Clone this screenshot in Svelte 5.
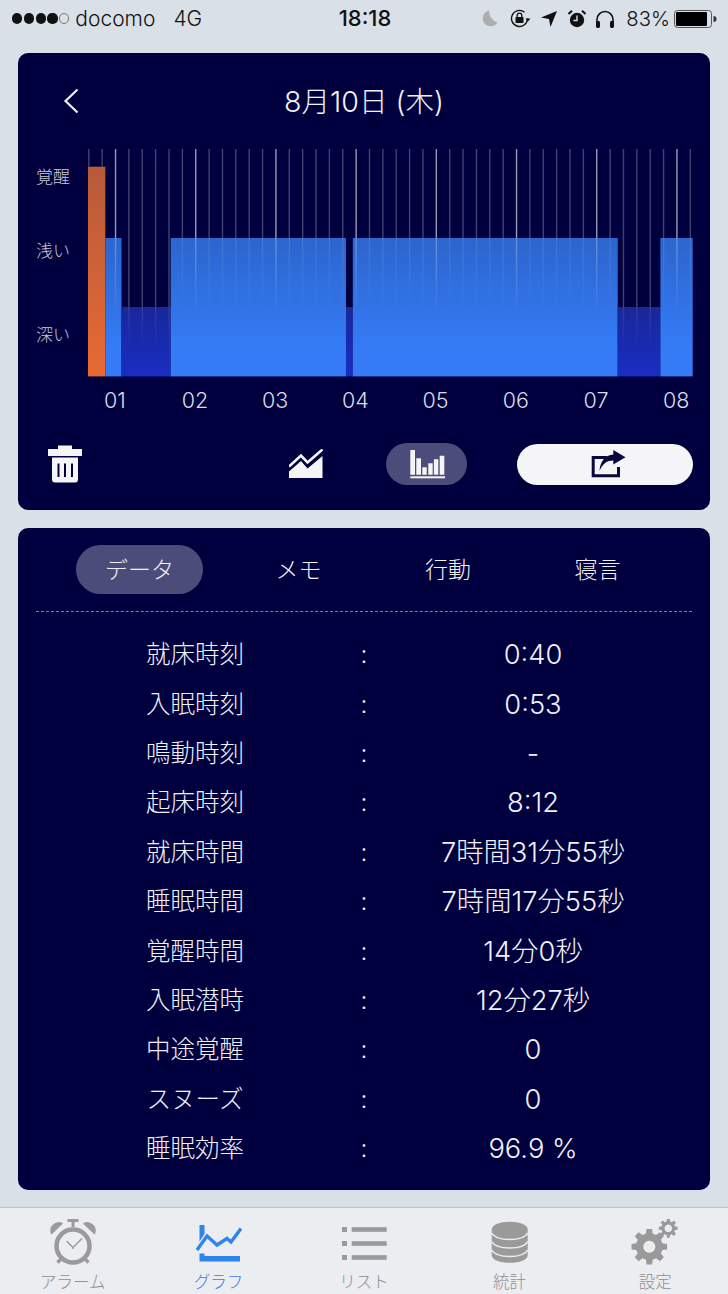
<script lang="ts">
	const rows = [
		['就床時刻', '0:40'],
		['入眠時刻', '0:53'],
		['鳴動時刻', '-'],
		['起床時刻', '8:12'],
		['就床時間', '7時間31分55秒'],
		['睡眠時間', '7時間17分55秒'],
		['覚醒時間', '14分0秒'],
		['入眠潜時', '12分27秒'],
		['中途覚醒', '0'],
		['スヌーズ', '0'],
		['睡眠効率', '96.9 %']
	];

	const tabs = ['データ', 'メモ', '行動', '寝言'];

	// chart stages, in page coordinates
	const bars = [
		{ x: 88, to: 105.3, top: 166.7, fill: 'url(#awake)' },
		{ x: 105.3, to: 121.5, top: 238, fill: 'url(#light)' },
		{ x: 121.5, to: 170.7, top: 307, fill: 'url(#deep)' },
		{ x: 170.7, to: 346, top: 238, fill: 'url(#light)' },
		{ x: 346, to: 352.8, top: 307, fill: 'url(#deep)' },
		{ x: 352.8, to: 617.7, top: 238, fill: 'url(#light)' },
		{ x: 617.7, to: 660.4, top: 307, fill: 'url(#deep)' },
		{ x: 660.4, to: 692.7, top: 238, fill: 'url(#light)' }
	];

	const step = 80.2 / 6;
	// 46 ticks, every sixth one is an hour mark
	const ticks = Array.from({ length: 46 }, (_, i) => {
		const x = 88.8 + i * step;
		const bar = bars.find((b) => x >= b.x && x < b.to);
		return { x, hour: i % 6 === 2, top: bar ? bar.top : 307 };
	});
	const hours = ['01', '02', '03', '04', '05', '06', '07', '08'];

	function gear(cx: number, cy: number, outer: number, inner: number, teeth: number) {
		const pts: string[] = [];
		const seg = (Math.PI * 2) / teeth;
		for (let i = 0; i < teeth; i++) {
			const a = i * seg;
			const at = (r: number, o: number) =>
				`${(cx + r * Math.cos(a + o * seg)).toFixed(2)} ${(cy + r * Math.sin(a + o * seg)).toFixed(2)}`;
			pts.push(at(inner, -0.32), at(outer, -0.2), at(outer, 0.2), at(inner, 0.32));
		}
		return 'M' + pts.join('L') + 'Z';
	}
</script>

<div class="page">
	<header class="status">
		<div class="status-left">
			<span class="dots">
				<i></i><i></i><i></i><i></i><i class="off"></i>
			</span>
			<span class="carrier">docomo</span>
			<span class="net">4G</span>
		</div>
		<div class="clock">18:18</div>
		<div class="status-right">
			<svg class="moon" width="16" height="17" viewBox="0 0 16 17">
				<path d="M7 0.5A8 8 0 1 0 15.5 12.5A12 12 0 0 1 7 0.5Z" fill="#adadb0" />
			</svg>
			<svg class="rot" width="21" height="19" viewBox="0 0 21 19">
				<path d="M17.5 9.5A8 8 0 1 1 14.5 3.2" fill="none" stroke="#111" stroke-width="1.4" />
				<path d="M15.5 9.5h5l-2.5 3z" fill="#111" />
				<rect x="5.5" y="8" width="8" height="6" rx="0.8" fill="#111" />
				<path d="M7.2 8V6.4a2.3 2.3 0 0 1 4.6 0V8" fill="none" stroke="#111" stroke-width="1.3" />
			</svg>
			<svg class="arrow" width="16" height="16" viewBox="0 0 16 16">
				<path d="M16 0L9.5 16L8 8L0 6.5Z" fill="#111" />
			</svg>
			<svg class="alarm" width="18" height="18" viewBox="0 0 18 18">
				<circle cx="9" cy="10" r="7.2" fill="#111" />
				<path d="M9 5.5V10.5H5.5" fill="none" stroke="#dae0e8" stroke-width="1.4" />
				<path d="M0.5 4L4 0.8M17.5 4L14 0.8" stroke="#111" stroke-width="2" />
			</svg>
			<svg class="phones" width="20" height="18" viewBox="0 0 20 18">
				<path d="M2 13V9.5a8 8 0 0 1 16 0V13" fill="none" stroke="#111" stroke-width="1.6" />
				<rect x="1" y="11" width="4" height="7" rx="1.4" fill="#111" />
				<rect x="15" y="11" width="4" height="7" rx="1.4" fill="#111" />
			</svg>
			<span class="pct">83%</span>
			<svg class="battery" width="44" height="18" viewBox="0 0 44 18">
				<rect x="0.5" y="0.5" width="37" height="17" rx="3" fill="none" stroke="#555" />
				<rect x="2" y="2" width="31" height="14" rx="1" fill="#000" />
				<path d="M39.5 6a3 3 0 0 1 0 6z" fill="#333" />
			</svg>
		</div>
	</header>

	<section class="card chart-card">
		<div class="title-row">
			<svg class="back" width="16" height="26" viewBox="0 0 16 26">
				<path d="M14.5 1.5L2.5 13L14.5 24.5" fill="none" stroke="#f1f1f5" stroke-width="2.2" />
			</svg>
			<h1>8月10日 (木)</h1>
		</div>

		<svg class="chart" width="692" height="270" viewBox="18 149 692 270">
			<defs>
				<linearGradient id="light" gradientUnits="userSpaceOnUse" x1="0" y1="238" x2="0" y2="345">
					<stop offset="0" stop-color="#2c65cd" />
					<stop offset="1" stop-color="#347bf5" />
				</linearGradient>
				<linearGradient id="deep" gradientUnits="userSpaceOnUse" x1="0" y1="307" x2="0" y2="376">
					<stop offset="0" stop-color="#19279a" />
					<stop offset="1" stop-color="#1a2dc3" />
				</linearGradient>
				<linearGradient id="awake" gradientUnits="userSpaceOnUse" x1="0" y1="167" x2="0" y2="376">
					<stop offset="0" stop-color="#b75a3a" />
					<stop offset="1" stop-color="#e76a33" />
				</linearGradient>
				<linearGradient id="tick" x1="0" y1="0" x2="0" y2="1">
					<stop offset="0" stop-color="#fff" stop-opacity="1" />
					<stop offset="1" stop-color="#fff" stop-opacity="0" />
				</linearGradient>
			</defs>

			<!-- ticks run behind the bars and only bleed faintly through their top -->
			{#each ticks as t}
				<rect x={t.x - 0.7} y="149" width="1.4" height={t.top - 149} fill="#fff" opacity={t.hour ? 0.6 : 0.26} />
			{/each}

			{#each bars as b}
				<rect x={b.x} y={b.top} width={b.to - b.x} height={376.4 - b.top} fill={b.fill} />
			{/each}

			{#each ticks as t}
				{#if t.x > 105.3}
					<rect
						x={t.x - 0.7}
						y={t.top}
						width="1.4"
						height={t.top < 300 ? 76 : 40}
						fill="url(#tick)"
						opacity={t.hour ? 0.28 : 0.1}
					/>
				{/if}
			{/each}

			<text class="stage" x="53" y="183">覚醒</text>
			<text class="stage" x="53" y="257">浅い</text>
			<text class="stage" x="53" y="341">深い</text>

			{#each hours as h, i}
				<text class="hour" x={114.8 + i * 80.2} y="408">{h}</text>
			{/each}
		</svg>

		<div class="tools">
			<svg class="trash" width="34" height="38" viewBox="0 0 34 38">
				<path d="M10 0.5H24V4H34V11H0V4H10Z" fill="#f5f5f7" />
				<path
					fill-rule="evenodd"
					d="M4 12.5H30V34.5a3 3 0 0 1-3 3H7a3 3 0 0 1-3-3ZM9.5 18.5V32H11.5V18.5ZM16 18.5V32H18V18.5ZM23 18.5V32H25V18.5Z"
					fill="#f5f5f7"
				/>
			</svg>
			<svg class="line-btn" width="34" height="30" viewBox="289 449 34 30">
				<path d="M289 466.5L301 455.5L307.5 462.5L322.5 449.5" fill="none" stroke="#f5f5f7" stroke-width="2.6" />
				<path d="M289 471.5L301 461L307.5 468.5L322.5 456V478H289Z" fill="#f5f5f7" />
			</svg>
			<div class="bars-btn">
				<svg width="36" height="30" viewBox="408 450 36 30">
					<path
						d="M409.3 451H414V475.7H409.3ZM415.3 459.3H420V475.7H415.3ZM421.3 468.3H425.7V475.7H421.3ZM427.3 464.3H431.7V475.7H427.3ZM432.9 460.3H437.3V475.7H432.9ZM438.7 456.7H443.3V475.7H438.7Z"
						fill="#f5f5f7"
					/>
					<rect x="409.3" y="477.3" width="34.7" height="2" fill="#f5f5f7" />
				</svg>
			</div>
			<div class="share-btn">
				<svg width="36" height="30" viewBox="590 449 36 30">
					<path d="M607 457.5H593.2V475.8H618.5V467" fill="none" stroke="#08083f" stroke-width="3" />
					<path d="M613.3 450L625.5 457.3L613.3 464.5V460.5C607 460.5 602.5 463.5 599.5 471C600 462 605 455 613.3 454.5Z" fill="#08083f" />
				</svg>
			</div>
		</div>
	</section>

	<section class="card data-card">
		<nav class="tabs">
			{#each tabs as tab, i}
				<div class="tab" class:active={i === 0}>{tab}</div>
			{/each}
		</nav>
		<div class="divider"></div>
		<div class="rows">
			{#each rows as [label, value]}
				<div class="row">
					<span class="label">{label}</span>
					<span>:</span>
					<span class="value">{value}</span>
				</div>
			{/each}
		</div>
	</section>

	<footer class="tabbar">
		<div class="item">
			<svg width="48" height="48" viewBox="49 1218 48 48">
				<circle cx="73" cy="1246" r="16.5" fill="none" stroke="#9a9a9a" stroke-width="4.5" />
				<path d="M73 1247.5L66.5 1241M73 1247.5L82 1238.5M73 1247.5V1249" fill="none" stroke="#9a9a9a" stroke-width="1.4" />
				<path d="M51.5 1233.5A8 8 0 0 1 62 1223.5ZM94.5 1233.5A8 8 0 0 0 84 1223.5Z" fill="#9a9a9a" stroke="#9a9a9a" stroke-width="1.5" stroke-linejoin="round" />
				<path d="M73 1222V1227" stroke="#9a9a9a" stroke-width="3" />
				<path d="M67.5 1220.5H78.5" stroke="#9a9a9a" stroke-width="3" />
				<path d="M62 1258L57.5 1262.5M84 1258L88.5 1262.5" stroke="#9a9a9a" stroke-width="3.5" />
			</svg>
			<span>アラーム</span>
		</div>
		<div class="item on">
			<svg width="48" height="48" viewBox="194 1218 48 48">
				<path d="M199.5 1225H204.5V1234L199.5 1241.5ZM199.5 1253.5H204.5V1256H240V1261.5H199.5Z" fill="#2f84ee" />
				<path d="M197 1250L207 1236L217 1245L227 1238.5L231 1242L241 1228.5" fill="none" stroke="#2f84ee" stroke-width="3.4" />
			</svg>
			<span>グラフ</span>
		</div>
		<div class="item">
			<svg width="48" height="48" viewBox="339 1218 48 48">
				<g fill="#9a9a9a">
					<rect x="341" y="1227" width="5" height="5" />
					<rect x="350.7" y="1227.2" width="35" height="4.6" />
					<rect x="341" y="1241" width="5" height="5" />
					<rect x="350.7" y="1241.2" width="35" height="4.6" />
					<rect x="341" y="1255" width="5" height="5" />
					<rect x="350.7" y="1255.2" width="35" height="4.6" />
				</g>
			</svg>
			<span>リスト</span>
		</div>
		<div class="item">
			<svg width="48" height="48" viewBox="485 1218 48 48">
				<path d="M490.7 1229.5C490.7 1224.5 499 1221.7 508.7 1221.7S526.7 1224.5 526.7 1229.5V1255C526.7 1260 518.5 1262.8 508.7 1262.8S490.7 1260 490.7 1255Z" fill="#9a9a9a" />
				<path d="M490.7 1233C493 1237.5 500 1239.5 508.7 1239.5S524.5 1237.5 526.7 1233M490.7 1241.5C493 1246 500 1248 508.7 1248S524.5 1246 526.7 1241.5M490.7 1250C493 1254.5 500 1256.5 508.7 1256.5S524.5 1254.5 526.7 1250" fill="none" stroke="#ebedf0" stroke-width="1.6" />
			</svg>
			<span>統計</span>
		</div>
		<div class="item">
			<svg width="48" height="48" viewBox="631 1218 48 48">
				<path fill-rule="evenodd" d={gear(649.3, 1246.7, 18, 13.5, 8) + 'M649.3 1240.7a6 6 0 1 0 .01 0Z'} fill="#9a9a9a" />
				<path fill-rule="evenodd" d={gear(668.3, 1228.3, 9.5, 7, 8) + 'M668.3 1224.5a3.8 3.8 0 1 0 .01 0Z'} fill="#9a9a9a" />
			</svg>
			<span>設定</span>
		</div>
	</footer>
</div>

<style>
	:global(body) {
		background: #dae0e8;
	}

	.page {
		height: 1294px;
		overflow: hidden;
		display: flex;
		flex-direction: column;
		font-family: Inter, 'Noto Sans CJK JP', sans-serif;
		font-weight: 300;
	}

	.status {
		height: 37px;
		flex-shrink: 0;
		padding: 0 10px 0 12px;
		display: grid;
		grid-template-columns: 1fr auto 1fr;
		align-items: center;
		font-size: 21px;
		color: #111;
	}

	.status-left,
	.status-right {
		display: flex;
		align-items: center;
	}

	.status-right {
		justify-content: flex-end;
	}

	.dots {
		display: flex;
		gap: 1.6px;
		margin-right: 6px;
	}

	.dots i {
		width: 10.2px;
		height: 10.2px;
		border-radius: 50%;
		background: #111;
		box-sizing: border-box;
	}

	.dots i.off {
		background: none;
		border: 1px solid #777;
	}

	.net {
		margin-left: 18px;
	}

	.clock {
		font-weight: 500;
		font-size: 22px;
		padding-bottom: 2px;
	}

	.moon {
		margin-right: 12px;
	}

	.rot {
		margin-right: 10px;
	}

	.arrow {
		margin-right: 11px;
	}

	.alarm {
		margin-right: 9px;
	}

	.phones {
		margin-right: 11px;
	}

	.pct {
		font-size: 20.3px;
		margin-right: 4px;
	}

	.card {
		margin: 0 18px;
		background: #00003f;
		border-radius: 10px;
		color: #f1f1f5;
		flex-shrink: 0;
	}

	.chart-card {
		margin-top: 16px;
		height: 457px;
	}

	.title-row {
		height: 96px;
		box-sizing: border-box;
		padding-bottom: 4px;
		display: flex;
		align-items: center;
		justify-content: center;
		position: relative;
	}

	.back {
		position: absolute;
		left: 45px;
		top: 35px;
	}

	h1 {
		margin: 0;
		font-size: 28.6px;
		font-weight: 300;
	}

	.chart {
		display: block;
	}

	.stage {
		font-size: 17px;
		fill: #c9c9d6;
		text-anchor: middle;
	}

	.hour {
		font-size: 21.5px;
		fill: #dcdce6;
		text-anchor: middle;
	}

	.tools {
		display: flex;
		align-items: center;
		padding-left: 30px;
		margin-top: 24px;
	}

	.line-btn {
		margin-left: 207px;
	}

	.bars-btn {
		margin-left: 63px;
		width: 81px;
		height: 42px;
		border-radius: 21px;
		background: #4c4c7a;
		display: flex;
		align-items: center;
		justify-content: center;
	}

	.share-btn {
		margin-left: 50px;
		width: 176px;
		height: 41px;
		border-radius: 21px;
		background: #f5f5f7;
		display: flex;
		align-items: center;
		justify-content: center;
	}

	.share-btn svg {
		margin-left: 6px;
	}

	.data-card {
		margin-top: 18px;
		height: 662px;
		padding: 17px 18px;
		box-sizing: border-box;
	}

	.tabs {
		display: flex;
		padding-left: 40px;
		font-size: 23px;
	}

	.tab {
		width: 127px;
		height: 49px;
		box-sizing: border-box;
		padding-bottom: 3px;
		margin-right: 22.5px;
		border-radius: 25px;
		display: flex;
		align-items: center;
		justify-content: center;
	}

	.tab.active {
		background: #4c4c7a;
		margin-right: 32px;
	}

	.divider {
		margin-top: 17px;
		border-top: 1px dashed #8080a8;
	}

	.rows {
		margin-top: 17.5px;
	}

	.row {
		height: 49.4px;
		display: grid;
		grid-template-columns: 1fr 20px 1fr;
		align-items: center;
		text-align: center;
		font-size: 24.5px;
	}

	.label {
		padding-bottom: 3px;
	}

	.value {
		font-size: 27.3px;
		line-height: 32px;
		padding-top: 2px;
	}

	.tabbar {
		margin-top: auto;
		height: 87px;
		box-sizing: border-box;
		background: #ebedf0;
		border-top: 1px solid #c0c3c8;
		display: grid;
		grid-template-columns: repeat(5, 1fr);
		flex-shrink: 0;
	}

	.item {
		display: flex;
		flex-direction: column;
		align-items: center;
		padding-top: 10px;
		font-size: 16.5px;
		line-height: 20px;
		color: #8f8f8f;
	}

	.item.on {
		color: #2f84ee;
	}

	.item svg {
		display: block;
		margin-bottom: 6px;
	}
</style>
